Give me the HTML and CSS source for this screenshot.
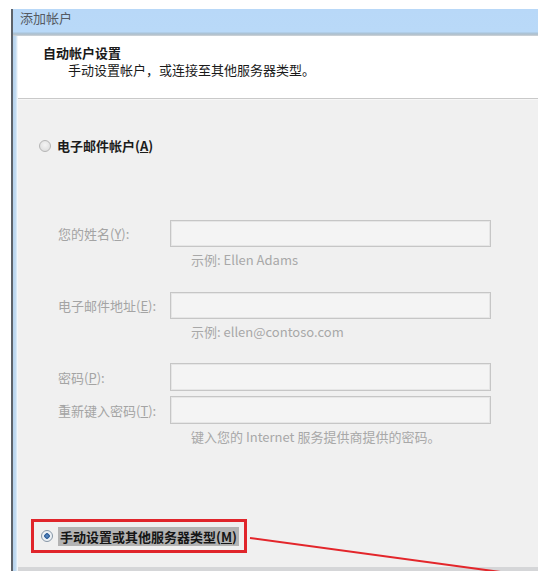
FILE: index.html
```html
<!DOCTYPE html>
<html lang="zh-CN">
<head>
    <meta charset="UTF-8">
    <meta name="viewport" content="width=device-width, initial-scale=1.0">
    <title>添加帐户</title>
    <link rel="stylesheet" href="styles.css">
</head>
<body>

<div class="window">
    <div class="titlebar">添加帐户</div>
    <div class="frame">
        <div class="edge"></div>
        <div class="content">
            <div class="header">
                <div class="header-title">自动帐户设置</div>
                <div class="header-sub">手动设置帐户，或连接至其他服务器类型。</div>
            </div>
            <div class="body">
                <label class="radio-row">
                    <span class="radio"></span>
                    <span class="radio-text">电子邮件帐户(<u>A</u>)</span>
                </label>

                <div class="form">
                    <div class="field">
                        <span class="label">您的姓名(<u>Y</u>):</span>
                        <div class="input"></div>
                    </div>
                    <div class="hint">示例: Ellen Adams</div>

                    <div class="field field-gap">
                        <span class="label">电子邮件地址(<u>E</u>):</span>
                        <div class="input"></div>
                    </div>
                    <div class="hint">示例: ellen@contoso.com</div>

                    <div class="field field-gap2">
                        <span class="label">密码(<u>P</u>):</span>
                        <div class="input"></div>
                    </div>
                    <div class="field field-tight">
                        <span class="label">重新键入密码(<u>T</u>):</span>
                        <div class="input"></div>
                    </div>
                    <div class="hint">键入您的 Internet 服务提供商提供的密码。</div>
                </div>

                <div class="manual">
                    <span class="radio checked"></span>
                    <span class="manual-text">手动设置或其他服务器类型(<u>M</u>)</span>
                </div>
            </div>
            <div class="bottom"></div>
        </div>
    </div>
</div>

<svg class="arrow" width="538" height="571" viewBox="0 0 538 571">
    <line x1="250" y1="538" x2="508" y2="573" stroke="#e3262b" stroke-width="2"/>
</svg>

</body>
</html>
```

FILE: styles.css
```css
body {
    margin: 0;
    height: 571px;
    overflow: hidden;
    background-color: #fff;
    font-family: "Noto Sans CJK SC", "Liberation Sans", sans-serif;
    font-size: 13px;
    position: relative;
}
.window {
    margin: 9px 0 0 11px;
    height: 562px;
    display: flex;
    flex-direction: column;
    border-left: 2px solid #5d636b;
}
.titlebar {
    height: 27px;
    box-sizing: border-box;
    padding: 0 0 0 7px;
    line-height: 17px;
    color: #555a62;
    background: linear-gradient(to bottom, #b8d8f8 0, #b9d9f8 23px, #a9c3d8 24px, #b7c2cb 26px, #d9dde0 27px);
}
.frame {
    flex: 1;
    display: flex;
}
.edge {
    width: 5px;
    background: linear-gradient(to right, #b5d1ec 0, #c3dcf2 3px, #e9f1f9 4px, #f8fbfd 5px);
}
.content {
    flex: 1;
    display: flex;
    flex-direction: column;
}
.header {
    height: 63px;
    box-sizing: border-box;
    padding: 8px 0 0 25px;
    background-color: #fff;
    border-bottom: 1px solid #c9c9c9;
    color: #1a1a1a;
    line-height: 17px;
}
.header-title {
    font-weight: bold;
}
.header-sub {
    padding-left: 25px;
}
.body {
    flex: 1;
    background-color: #f0f0f0;
    border-top: 1px solid #f7f7f7;
    padding-top: 37px;
}
.bottom {
    height: 4px;
    background-color: #d5d6d8;
}
.radio-row {
    display: flex;
    align-items: center;
    gap: 6px;
    padding-left: 21px;
    line-height: 17px;
    color: #1c1c1c;
    font-weight: bold;
}
.radio {
    width: 12px;
    height: 12px;
    box-sizing: border-box;
    border-radius: 50%;
    border: 1px solid #b5b5b5;
    background: radial-gradient(circle at 50% 40%, #f4f4f4 0, #d9d9d9 100%);
    flex-shrink: 0;
}
.radio.checked {
    border-color: #8696a6;
    background: radial-gradient(circle, #5f8fc8 0, #2d5d98 2.5px, #e8eef4 3px, #f4f6f8 100%);
}
.form {
    padding-left: 40px;
    margin-top: 66px;
    color: #a4a4a4;
}
.field {
    display: flex;
    align-items: center;
    height: 27px;
}
.field-gap {
    margin-top: 24px;
}
.field-gap2 {
    margin-top: 23px;
    height: 28px;
}
.field-tight {
    margin-top: 5px;
    height: 28px;
}
.label {
    width: 112px;
    line-height: 17px;
}
.input {
    width: 321px;
    height: 100%;
    box-sizing: border-box;
    border: 1px solid #c6c6c6;
    background-color: #f4f4f4;
    box-shadow: inset 0 0 0 1px #e6e6e6;
}
.hint {
    padding-left: 133px;
    margin-top: 4px;
    line-height: 17px;
    color: #a8a8a8;
}
.manual {
    margin: 74px 0 0 13px;
    width: 216px;
    height: 34px;
    box-sizing: border-box;
    border: 3px solid #e0252b;
    display: flex;
    align-items: center;
    gap: 5px;
    padding-left: 7px;
}
.manual-text {
    background-color: #b3b3b3;
    color: #161616;
    font-weight: bold;
    line-height: 19px;
    padding: 0 2px;
}
.arrow {
    position: absolute;
    left: 0;
    top: 0;
    pointer-events: none;
}
```
